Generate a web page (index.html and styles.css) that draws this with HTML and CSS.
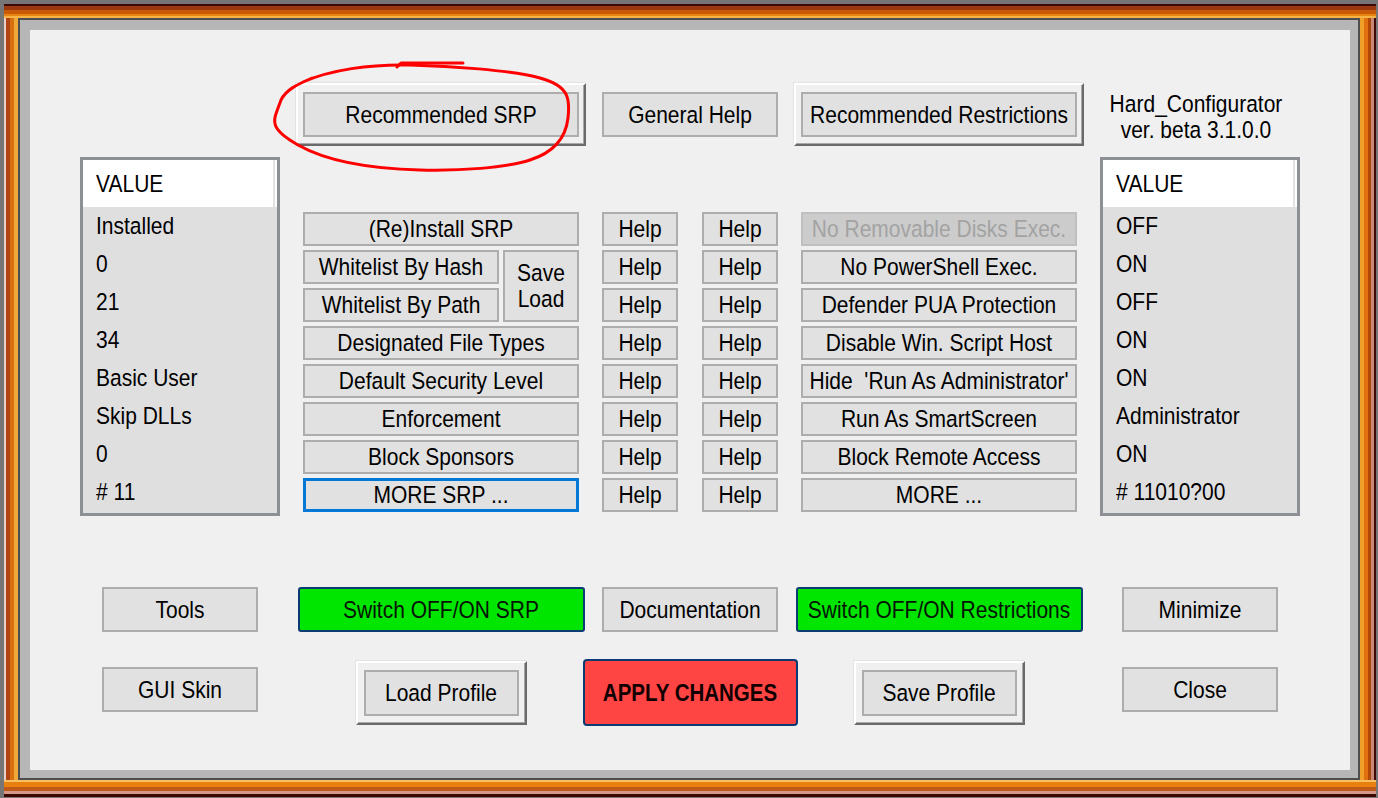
FILE: index.html
```html
<!DOCTYPE html>
<html lang="en">
<head>
<meta charset="utf-8">
<title>Hard_Configurator</title>
<link rel="stylesheet" href="styles.css">
</head>
<body>
<div class="frame">
  <div class="bevel">
    <div class="panel">
      <div class="row row-top">
        <div class="cell-empty"></div>
        <div class="raised raised-top"><button class="btn btn-wide btn-tall"><span class="t">Recommended SRP</span></button></div>
        <button class="btn btn-mid btn-tall"><span class="t">General Help</span></button>
        <div class="raised raised-top"><button class="btn btn-wide btn-tall"><span class="t">Recommended Restrictions</span></button></div>
        <div class="title"><span class="t">Hard_Configurator</span><br><span class="t">ver. beta 3.1.0.0</span></div>
      </div>

      <div class="row row-main">
        <div class="listbox">
          <div class="list-head"><span class="t">VALUE</span></div>
          <div class="list-row"><span class="t">Installed</span></div>
          <div class="list-row"><span class="t">0</span></div>
          <div class="list-row"><span class="t">21</span></div>
          <div class="list-row"><span class="t">34</span></div>
          <div class="list-row"><span class="t">Basic User</span></div>
          <div class="list-row"><span class="t">Skip DLLs</span></div>
          <div class="list-row"><span class="t">0</span></div>
          <div class="list-row"><span class="t"># 11</span></div>
        </div>

        <div class="srp-col">
          <button class="btn span2"><span class="t">(Re)Install SRP</span></button>
          <button class="btn"><span class="t">Whitelist By Hash</span></button>
          <button class="btn btn-saveload"><span class="t">Save</span><br><span class="t">Load</span></button>
          <button class="btn"><span class="t">Whitelist By Path</span></button>
          <button class="btn span2"><span class="t">Designated File Types</span></button>
          <button class="btn span2"><span class="t">Default Security Level</span></button>
          <button class="btn span2"><span class="t">Enforcement</span></button>
          <button class="btn span2"><span class="t">Block Sponsors</span></button>
          <button class="btn span2 btn-focus"><span class="t">MORE SRP ...</span></button>
        </div>

        <div class="help-col">
          <button class="btn"><span class="t">Help</span></button><button class="btn"><span class="t">Help</span></button>
          <button class="btn"><span class="t">Help</span></button><button class="btn"><span class="t">Help</span></button>
          <button class="btn"><span class="t">Help</span></button><button class="btn"><span class="t">Help</span></button>
          <button class="btn"><span class="t">Help</span></button><button class="btn"><span class="t">Help</span></button>
          <button class="btn"><span class="t">Help</span></button><button class="btn"><span class="t">Help</span></button>
          <button class="btn"><span class="t">Help</span></button><button class="btn"><span class="t">Help</span></button>
          <button class="btn"><span class="t">Help</span></button><button class="btn"><span class="t">Help</span></button>
          <button class="btn"><span class="t">Help</span></button><button class="btn"><span class="t">Help</span></button>
        </div>

        <div class="restr-col">
          <button class="btn btn-disabled"><span class="t">No Removable Disks Exec.</span></button>
          <button class="btn"><span class="t">No PowerShell Exec.</span></button>
          <button class="btn"><span class="t">Defender PUA Protection</span></button>
          <button class="btn"><span class="t">Disable Win. Script Host</span></button>
          <button class="btn"><span class="t">Hide&nbsp; 'Run As Administrator'</span></button>
          <button class="btn"><span class="t">Run As SmartScreen</span></button>
          <button class="btn"><span class="t">Block Remote Access</span></button>
          <button class="btn"><span class="t">MORE ...</span></button>
        </div>

        <div class="listbox">
          <div class="list-head"><span class="t">VALUE</span></div>
          <div class="list-row"><span class="t">OFF</span></div>
          <div class="list-row"><span class="t">ON</span></div>
          <div class="list-row"><span class="t">OFF</span></div>
          <div class="list-row"><span class="t">ON</span></div>
          <div class="list-row"><span class="t">ON</span></div>
          <div class="list-row"><span class="t">Administrator</span></div>
          <div class="list-row"><span class="t">ON</span></div>
          <div class="list-row"><span class="t"># 11010?00</span></div>
        </div>
      </div>

      <div class="row row-b1">
        <button class="btn btn-small btn-tall"><span class="t">Tools</span></button>
        <button class="btn btn-green"><span class="t">Switch OFF/ON SRP</span></button>
        <button class="btn btn-mid btn-tall"><span class="t">Documentation</span></button>
        <button class="btn btn-green"><span class="t">Switch OFF/ON Restrictions</span></button>
        <button class="btn btn-small btn-tall"><span class="t">Minimize</span></button>
      </div>

      <div class="row row-b2">
        <button class="btn btn-small btn-tall btn-lift"><span class="t">GUI Skin</span></button>
        <div class="raised raised-bottom"><button class="btn btn-profile"><span class="t">Load Profile</span></button></div>
        <button class="btn btn-apply"><span class="t">APPLY CHANGES</span></button>
        <div class="raised raised-bottom"><button class="btn btn-profile"><span class="t">Save Profile</span></button></div>
        <button class="btn btn-small btn-tall btn-lift"><span class="t">Close</span></button>
      </div>
    </div>
  </div>
</div>

<svg class="annotation" width="1378" height="798" viewBox="0 0 1378 798" aria-hidden="true">
  <path d="M 303 82 C 330 70, 370 64, 410 65 S 510 70, 540 78 S 570 100, 568 118 S 555 152, 530 160 S 460 171, 420 170 S 330 163, 298 145 S 274 120, 281 100 C 286 90, 296 85, 312 78" />
  <path d="M 397 67 L 401 63 L 463 63" />
</svg>
</body>
</html>
```

FILE: styles.css
```css
* {
  box-sizing: border-box;
}

html,
body {
  margin: 0;
  padding: 0;
}

body {
  position: relative;
  width: 1378px;
  height: 798px;
  overflow: hidden;
  padding: 4px 2px 1px 4px;
  background: #767676;
  font-family: "Liberation Sans", Arial, sans-serif;
  font-size: 21px;
  color: #000;
}

/* text glyphs of the original skin are taller than Arial's */
.t {
  display: inline-block;
  transform: scaleY(1.14);
}

/* orange wooden-like window frame */
.frame {
  height: 793px;
  padding: 14px 16px 17px 14px;
  background:
    linear-gradient(to bottom, #3c0a02 0 2px, #9a3810 2px 6px, #c85a08 6px 10px, #e88410 10px 12px, #f6b448 12px 14px) top left / 100% 14px no-repeat,
    linear-gradient(to top, #3c0800 0 3px, #d49888 3px 6px, #c05818 6px 10px, #e88010 10px 15px, #f8c060 15px 17px) bottom left / 100% 17px no-repeat,
    linear-gradient(to right, #e8d0c8 0 2px, #b04414 2px 6px, #d87010 6px 10px, #f0a838 10px 14px) top left / 14px 100% no-repeat,
    linear-gradient(to left, #400800 0 2px, #c88878 2px 5px, #b04808 5px 8px, #e07010 8px 12px, #f0a028 12px 16px) top right / 16px 100% no-repeat;
}

.bevel {
  height: 100%;
  border: 2px solid #4e4e4e;
  padding: 10px 8px 8px 10px;
  background: #b6b6b6;
}

.panel {
  height: 100%;
  background: #f0f0f0;
  padding: 53px 50px 0 50px;
}

.row {
  display: grid;
  grid-template-columns: 200px 276px 176px 276px 200px;
  column-gap: 23px;
}

.row-top {
  height: 63px;
  align-items: center;
  justify-items: center;
}

.row-main {
  margin-top: 11px;
  align-items: start;
}

.row-b1 {
  margin-top: 71px;
  height: 45px;
  align-items: center;
  justify-items: center;
}

.row-b2 {
  margin-top: 27px;
  height: 67px;
  align-items: center;
  justify-items: center;
}

/* buttons */
.btn {
  font: inherit;
  color: #000;
  background: #e1e1e1;
  border: 2px solid #adadad;
  margin: 0;
  padding: 0;
  height: 34px;
  white-space: nowrap;
  text-align: center;
  line-height: 26px;
}

.btn-tall {
  height: 45px;
}

.btn-lift {
  margin-bottom: 6px;
}

.btn-wide {
  width: 276px;
}

.btn-mid {
  width: 176px;
}

.btn-small {
  width: 156px;
}

.btn-profile {
  width: 155px;
  height: 46px;
}

.btn-disabled {
  background: #cccccc;
  border-color: #bfbfbf;
  color: #a3a3a3;
}

.btn-focus {
  border: 3px solid #0078d7;
}

.btn-green {
  width: 287px;
  height: 45px;
  background: #00e600;
  border: 2px solid #0b3b73;
  border-radius: 3px;
  color: #061406;
}

.btn-apply {
  width: 215px;
  height: 67px;
  background: #ff4444;
  border: 2px solid #0b3b73;
  border-radius: 4px;
  font-weight: bold;
  font-size: 20.5px;
  color: #120000;
}

.btn-saveload {
  height: auto;
  grid-row: span 2;
  line-height: 26px;
}

/* raised (default) button frame */
.raised {
  border: 2px solid;
  border-color: #ffffff #6a6a6a #6a6a6a #ffffff;
  box-shadow: -1px -1px 0 #e3e3e3, inset -1px -1px 0 #a8a8a8;
  background: #f0f0f0;
  display: flex;
}

.raised-top {
  padding: 7px 5px;
}

.raised-bottom {
  padding: 7px 6px;
}

.title {
  text-align: center;
  line-height: 26px;
  margin-top: 5px;
  margin-right: 8px;
}

/* list boxes */
.listbox {
  height: 359px;
  border: 3px solid #8c9095;
  background: #e0dfe0;
}

.list-head {
  height: 47px;
  padding-left: 13px;
  display: flex;
  align-items: center;
  background: linear-gradient(to right, #ffffff 0 190px, #e3e3e3 190px 192px, #ffffff 192px);
}

.list-row {
  height: 38px;
  padding-left: 13px;
  display: flex;
  align-items: center;
  white-space: nowrap;
}

/* middle button columns */
.srp-col {
  margin-top: 55px;
  display: grid;
  grid-template-columns: 196px 76px;
  grid-auto-rows: 34px;
  gap: 4px;
}

.span2 {
  grid-column: 1 / -1;
}

.help-col {
  margin-top: 55px;
  display: grid;
  grid-template-columns: 76px 76px;
  grid-auto-rows: 34px;
  column-gap: 24px;
  row-gap: 4px;
}

.restr-col {
  margin-top: 55px;
  display: grid;
  grid-template-columns: 276px;
  grid-auto-rows: 34px;
  row-gap: 4px;
}

/* hand-drawn red highlight */
.annotation {
  position: absolute;
  left: 0;
  top: 0;
  pointer-events: none;
}

.annotation path {
  fill: none;
  stroke: #ff0000;
  stroke-width: 3;
  stroke-linecap: round;
  stroke-linejoin: round;
}
```
